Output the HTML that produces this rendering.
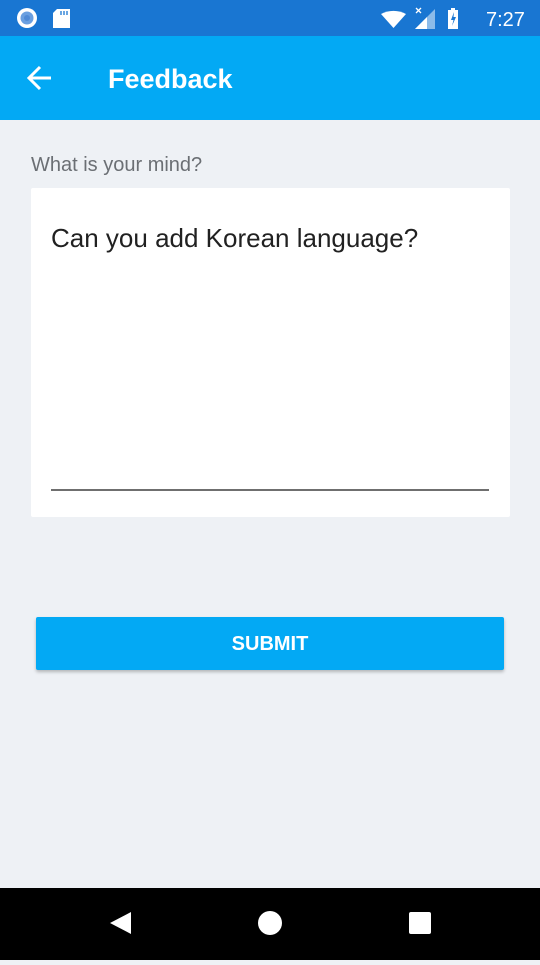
<!DOCTYPE html>
<html><head><meta charset="utf-8"><style>
*{margin:0;padding:0;box-sizing:border-box}
body{width:540px;height:960px;background:#eef1f5;font-family:"Liberation Sans",sans-serif;position:relative;overflow:hidden}
.sb{position:absolute;top:0;left:0;width:540px;height:36px;background:#1976d2}
.ab{position:absolute;top:36px;left:0;width:540px;height:84px;background:#03a9f4}
.title{position:absolute;left:108px;top:62px;color:#fff;font-size:27px;font-weight:bold;line-height:34px}
.lbl{position:absolute;left:31px;top:154px;color:#6b6f74;font-size:20px}
.card{position:absolute;left:31px;top:188px;width:479px;height:329px;background:#fff;border-radius:2px}
.txt{position:absolute;left:51px;top:223px;font-size:26px;color:#212121}
.line{position:absolute;left:51px;top:489px;width:438px;height:1.5px;background:#6f6f6f}
.btn{position:absolute;left:36px;top:617px;width:468px;height:53px;background:#03a9f4;border-radius:2px;box-shadow:0 2px 3px rgba(0,0,0,.25);color:#fff;font-size:20px;font-weight:bold;text-align:center;line-height:55px}
.nav{position:absolute;top:888px;left:0;width:540px;height:72px;background:#000}
</style></head><body>
<div class="sb">
<svg width="540" height="36" style="position:absolute;left:0;top:0">
<circle cx="27" cy="18" r="10" fill="#fff"/><circle cx="27" cy="18" r="6.5" fill="#6a9fe0"/><circle cx="27" cy="18" r="3" fill="#4f8ad6"/>
<path d="M57 9h13v19h-17v-15z" fill="#fff"/><path d="M61 11v4M64 11v4M67 11v4" stroke="#1976d2" stroke-width="1.3"/>
<path d="M381 14a27 27 0 0 1 25 0l-12.5 14z" fill="#fff"/>
<path d="M415 29h20v-20z" fill="#fff" opacity=".5"/><path d="M415 29h12v-12z" fill="#fff"/>
<path d="M416 8l5 5M421 8l-5 5" stroke="#fff" stroke-width="1.3"/>
<rect x="448" y="10" width="10" height="19" fill="#fff"/><rect x="451" y="8" width="4" height="3" fill="#fff"/>
<path d="M454 12l-3 8h2.5l-1.5 6 4-9h-2.5z" fill="#1976d2"/>
<text x="486" y="26" fill="#fff" font-size="20" font-family="Liberation Sans">7:27</text>
</svg></div>
<div class="ab"><svg width="40" height="40" style="position:absolute;left:21px;top:22px"><path d="M30 20H8M19 9L8 20l11 11" stroke="#fff" stroke-width="3" fill="none"/></svg></div>
<div class="title">Feedback</div>
<div class="lbl">What is your mind?</div>
<div class="card"></div>
<div class="txt">Can you add Korean language?</div>
<div class="line"></div>
<div class="btn">SUBMIT</div>
<div class="nav"><svg width="540" height="72">
<path d="M131 24v22l-21-11z" fill="#fff"/>
<circle cx="270" cy="35" r="12" fill="#fff"/>
<rect x="409" y="24" width="22" height="22" rx="2" fill="#fff"/>
</svg></div>
</body></html>
